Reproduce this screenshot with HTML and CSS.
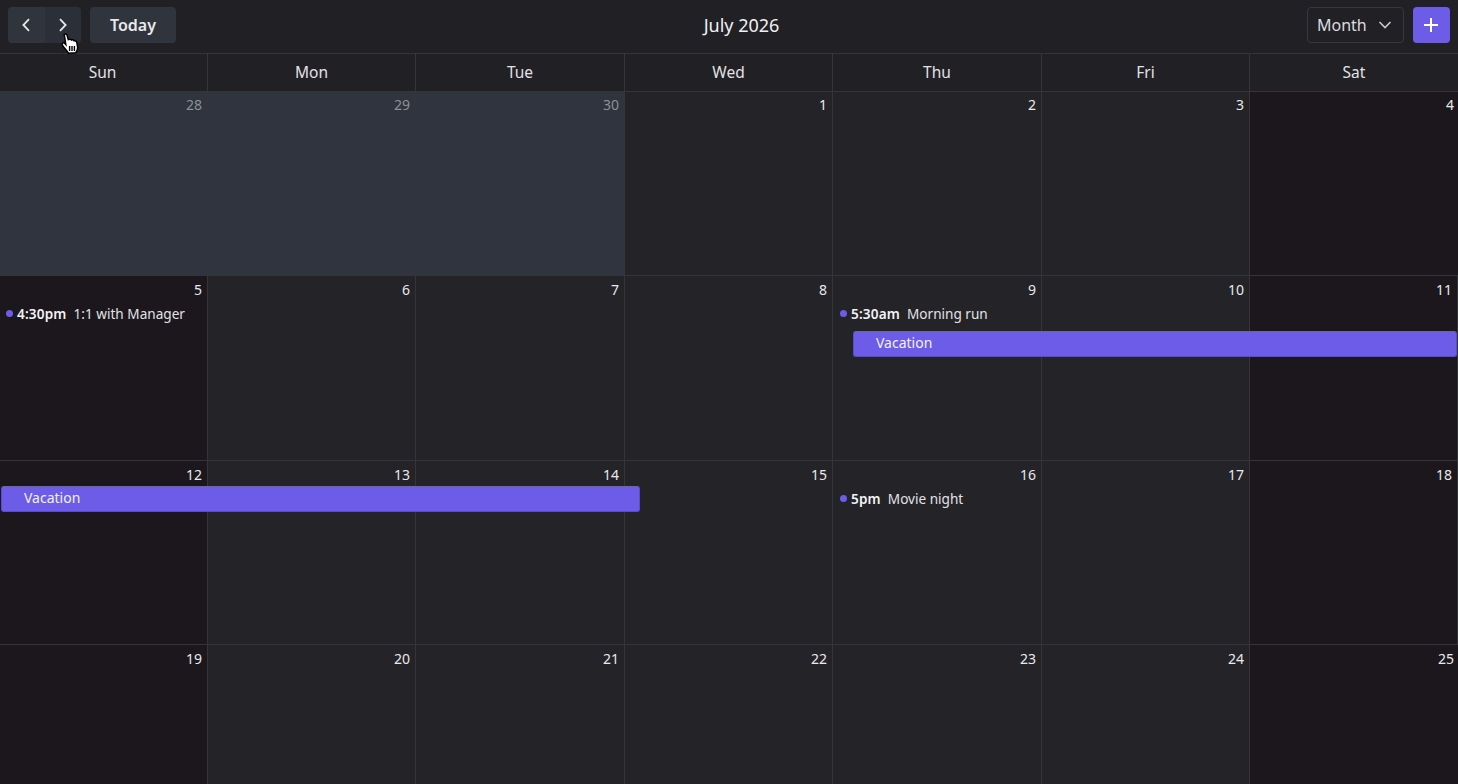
FILE: index.html
```html
<!DOCTYPE html>
<html lang="en">
<head>
	<meta charset="UTF-8">
	<title>Calendar</title>
	<link rel="stylesheet" href="styles.css">
</head>
<body>
	<div class="toolbar">
		<div class="left">
			<div class="pager">
				<button class="page-btn"><svg width="16" height="16" viewBox="0 0 16 16"><path d="M10 2.2 L4.4 8 L10 13.8"/></svg></button>
				<button class="page-btn next"><svg width="16" height="16" viewBox="0 0 16 16"><path d="M5 2.2 L10.6 8 L5 13.8"/></svg></button>
			</div>
			<button class="today">Today</button>
		</div>
		<div class="title">July 2026</div>
		<div class="right">
			<div class="view">Month<svg width="16" height="16" viewBox="0 0 16 16"><path d="M2.5 5 L8 10.5 L13.5 5"/></svg></div>
			<button class="add"><svg width="18" height="18" viewBox="0 0 18 18"><path d="M9 2 V16 M2 9 H16"/></svg></button>
		</div>
	</div>

	<div class="head">
		<div>Sun</div><div>Mon</div><div>Tue</div><div>Wed</div><div>Thu</div><div>Fri</div><div>Sat</div>
	</div>

	<div class="week first">
		<div class="day muted"><span class="num">28</span></div>
		<div class="day muted"><span class="num">29</span></div>
		<div class="day muted"><span class="num">30</span></div>
		<div class="day"><span class="num">1</span></div>
		<div class="day"><span class="num">2</span></div>
		<div class="day"><span class="num">3</span></div>
		<div class="day weekend"><span class="num">4</span></div>
	</div>
	<div class="week">
		<div class="day weekend"><span class="num">5</span>
			<div class="event"><i></i><b>4:30pm</b>1:1 with Manager</div>
		</div>
		<div class="day"><span class="num">6</span></div>
		<div class="day"><span class="num">7</span></div>
		<div class="day"><span class="num">8</span></div>
		<div class="day"><span class="num">9</span>
			<div class="event thu"><i></i><b>5:30am</b>Morning run</div>
		</div>
		<div class="day"><span class="num">10</span></div>
		<div class="day weekend"><span class="num">11</span></div>
		<div class="bar bar-a">Vacation</div>
	</div>
	<div class="week">
		<div class="day weekend"><span class="num">12</span></div>
		<div class="day"><span class="num">13</span></div>
		<div class="day"><span class="num">14</span></div>
		<div class="day"><span class="num">15</span></div>
		<div class="day"><span class="num">16</span>
			<div class="event thu"><i></i><b>5pm</b>Movie night</div>
		</div>
		<div class="day"><span class="num">17</span></div>
		<div class="day weekend"><span class="num">18</span></div>
		<div class="bar bar-b">Vacation</div>
	</div>
	<div class="week last">
		<div class="day weekend"><span class="num">19</span></div>
		<div class="day"><span class="num">20</span></div>
		<div class="day"><span class="num">21</span></div>
		<div class="day"><span class="num">22</span></div>
		<div class="day"><span class="num">23</span></div>
		<div class="day"><span class="num">24</span></div>
		<div class="day weekend"><span class="num">25</span></div>
	</div>

	<svg class="cursor" width="18" height="21" viewBox="0 0 18 21">
		<path d="M3.2 1.4 C4.3 .5 5.7 1 6.1 2.4 L7.3 6.6 C8.6 6 10 6.2 10.6 7 C11.6 6.6 12.8 7 13.2 7.8 C14.5 7.5 15.6 8.4 15.9 9.8 L16.6 14 C16.9 16.4 16 18.2 14.8 19.8 L7.4 20.2 C6.6 18.6 4.8 16.8 2.6 14 C1.2 12.2 .7 11 1.5 10.2 C2.4 9.4 3.6 10 4.8 11.4 Z" fill="#fff" stroke="#000" stroke-width="1.5"/>
		<path d="M8.6 13 V18 M11 13 V18 M13.4 13 V18" fill="none" stroke="#000" stroke-width="1.4"/>
	</svg>
</body>
</html>
```

FILE: styles.css
```css
*{box-sizing:border-box;}
html,body{height:100%;}
body{margin:0;overflow:hidden;position:relative;background:#242328;color:#e9e9ec;font-family:"Noto Sans",sans-serif;font-size:14px;}
button{font-family:inherit;border:0;padding:0;margin:0;}

.toolbar{display:flex;align-items:flex-start;justify-content:space-between;height:54px;padding:7px 8px 0;background:#212025;border-bottom:1px solid #34343a;}
.left,.right{display:flex;align-items:center;}
.pager{display:flex;border-radius:4px;overflow:hidden;}
.page-btn{display:flex;align-items:center;justify-content:center;width:37px;height:36px;background:#2f343d;}
.page-btn.next{width:36px;background:#2b3038;}
.page-btn svg{fill:none;stroke:#e6e6e9;stroke-width:1.8;}
.today{margin-left:9px;width:86px;height:36px;border-radius:4px;background:#2f343d;color:#e9e9ec;font-size:16px;font-weight:600;}
.title{font-size:18px;line-height:36px;color:#f0f0f2;}
.view{display:flex;align-items:center;justify-content:space-between;width:97px;height:36px;padding:0 10px 0 9px;border:1px solid #37373d;border-radius:4px;font-size:16px;color:#dcdce0;}
.view svg{fill:none;stroke:#c9c9ce;stroke-width:1.6;}
.add{display:flex;align-items:center;justify-content:center;margin-left:9px;width:37px;height:36px;border-radius:4px;background:#6c5ce7;}
.add svg{fill:none;stroke:#fff;stroke-width:2;}

.head,.week{display:grid;grid-template-columns:208px 208px 209px 208px 209px 208px 208px;}
.head{height:37.8px;background:#212025;border-bottom:1px solid #34343a;}
.head div{text-align:center;line-height:36px;font-size:15.5px;color:#e2e2e6;border-right:1px solid #34343a;}
.head div:first-child{padding-right:2px;}
.head div:last-child{border-right:0;}

.week{position:relative;height:184.5px;}
.week.last{height:140px;}
.day{min-width:0;padding:4px 5px 0 0;background:#242328;border-right:1px solid #34343a;border-bottom:1px solid #34343a;}
.day:last-of-type{border-right:0;padding-right:4px;}
.week.first .day{padding-top:3px;}
.week.last .day{border-bottom:0;}
.day.weekend{background:#1b171c;}
.day.muted{background:#2f343e;}
.num{display:block;text-align:right;font-size:14px;line-height:19px;color:#e9e9ec;}
.muted .num{color:#8d9098;}

.event{display:flex;align-items:center;margin-top:4px;padding-left:6px;height:21px;font-size:13.6px;color:#e2e2e6;white-space:nowrap;}
.event.thu{padding-left:7px;}
.event i{width:7px;height:7px;margin-right:4px;border-radius:50%;background:#6c5ce7;}
.event b{margin-right:7px;letter-spacing:.15px;font-weight:600;color:#f2f2f4;}

.bar{position:absolute;height:26px;line-height:22px;padding-left:22px;font-size:14px;color:#f2f2f4;background:#6c5ce7;border:1px solid #5a4bd0;border-top-color:#6d6795;border-radius:3px;}
.bar-a{top:55px;left:853px;right:1px;}
.bar-b{top:25px;left:1px;width:639px;}

.cursor{position:absolute;left:61px;top:33px;}
```
